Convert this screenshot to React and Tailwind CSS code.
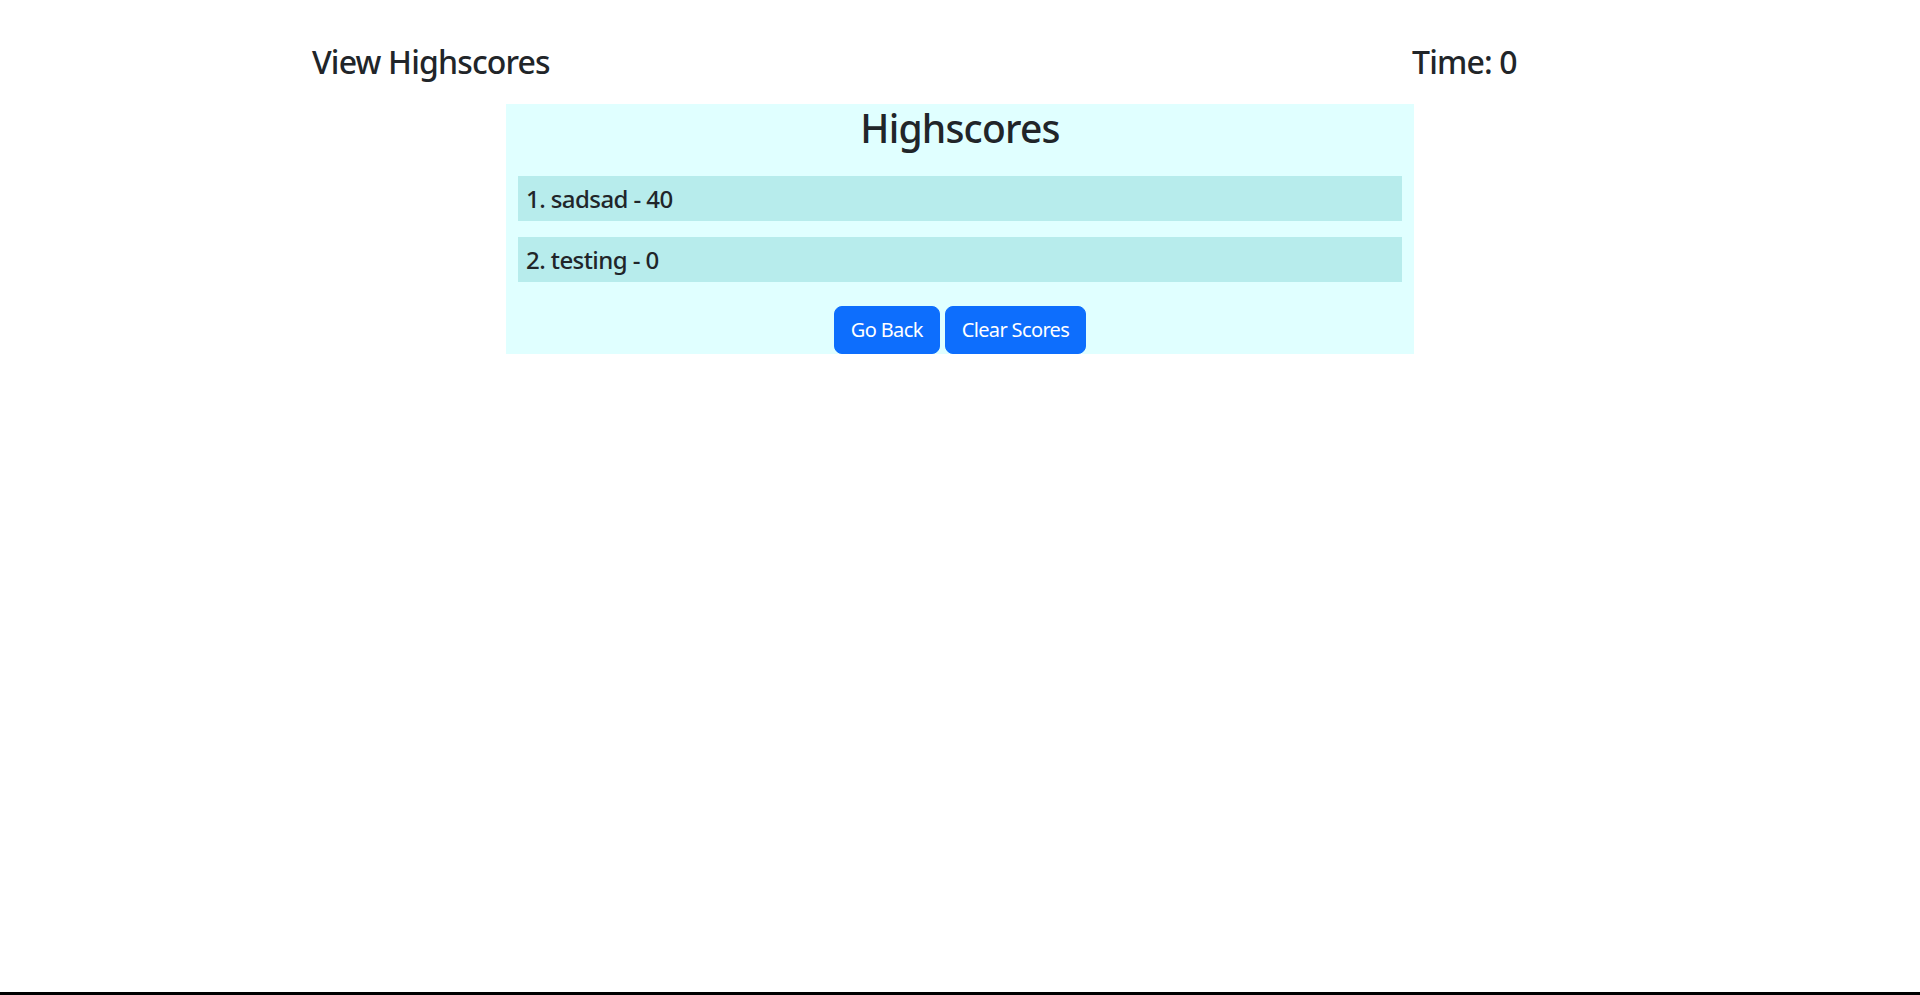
export default function App() {
  const scores = [
    { name: "sadsad", score: 40 },
    { name: "testing", score: 0 },
  ];
  return (
    <div
      className="h-[995px] box-border border-b-[3px] border-black bg-white text-[#212529]"
      style={{ fontFamily: '"Noto Sans", "Open Sans", sans-serif' }}
    >
      <header className="w-[1320px] mx-auto pt-[43px] grid grid-cols-12">
        <div className="col-span-10 px-3 text-[32px] leading-[38px] font-medium tracking-[-0.026em]">
          View Highscores
        </div>
        <div className="col-span-2 px-3 text-[32px] leading-[38px] font-medium tracking-[-0.026em]">
          Time: 0
        </div>
      </header>

      <main className="w-[908px] mx-auto mt-[23px] bg-[#e0ffff] flex flex-col">
        <h1 className="pt-[2px] text-center text-[39px] leading-[44px] font-medium tracking-[-0.02em]">
          Highscores
        </h1>
        <ol className="mt-[26px] mx-3 flex flex-col gap-4">
          {scores.map((s, i) => (
            <li
              key={s.name}
              className="bg-[#b7ecec] px-2 py-2 text-[24px] leading-[29px] font-medium tracking-[-0.024em]"
            >
              {i + 1}. {s.name} - {s.score}
            </li>
          ))}
        </ol>
        <div className="mt-[24px] flex justify-center gap-[5px]">
          <button className="bg-[#0d6efd] border border-[#0d6efd] text-white rounded-lg px-4 py-2 text-[20px] leading-[30px] tracking-[-0.032em]">
            Go Back
          </button>
          <button className="bg-[#0d6efd] border border-[#0d6efd] text-white rounded-lg px-4 py-2 text-[20px] leading-[30px] tracking-[-0.032em]">
            Clear Scores
          </button>
        </div>
      </main>
    </div>
  );
}
